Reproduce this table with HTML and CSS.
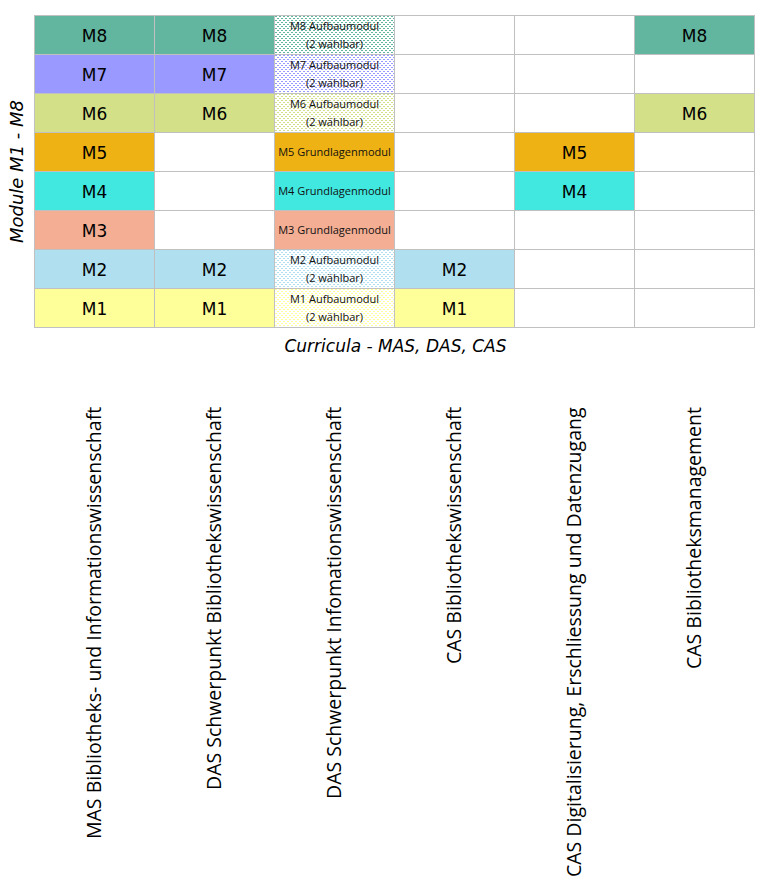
FILE: index.html
```html
<!DOCTYPE html>
<html lang="de">
<head>
<meta charset="utf-8">
<title>Module und Curricula</title>
<link rel="stylesheet" href="styles.css">
</head>
<body>
<div class="page">
  <div class="chart-row">
    <div class="yaxis"><span class="ylabel">Module M1 - M8</span></div>
    <div class="grid">
      <div class="cell m8">M8</div><div class="cell m8">M8</div><div class="cell small hatch h8">M8 Aufbaumodul<br>(2 wählbar)</div><div class="cell"></div><div class="cell"></div><div class="cell m8">M8</div>
      <div class="cell m7">M7</div><div class="cell m7">M7</div><div class="cell small hatch h7">M7 Aufbaumodul<br>(2 wählbar)</div><div class="cell"></div><div class="cell"></div><div class="cell"></div>
      <div class="cell m6">M6</div><div class="cell m6">M6</div><div class="cell small hatch h6">M6 Aufbaumodul<br>(2 wählbar)</div><div class="cell"></div><div class="cell"></div><div class="cell m6">M6</div>
      <div class="cell m5">M5</div><div class="cell"></div><div class="cell small m5">M5 Grundlagenmodul</div><div class="cell"></div><div class="cell m5">M5</div><div class="cell"></div>
      <div class="cell m4">M4</div><div class="cell"></div><div class="cell small m4">M4 Grundlagenmodul</div><div class="cell"></div><div class="cell m4">M4</div><div class="cell"></div>
      <div class="cell m3">M3</div><div class="cell"></div><div class="cell small m3">M3 Grundlagenmodul</div><div class="cell"></div><div class="cell"></div><div class="cell"></div>
      <div class="cell m2">M2</div><div class="cell m2">M2</div><div class="cell small hatch h2">M2 Aufbaumodul<br>(2 wählbar)</div><div class="cell m2">M2</div><div class="cell"></div><div class="cell"></div>
      <div class="cell m1">M1</div><div class="cell m1">M1</div><div class="cell small hatch h1">M1 Aufbaumodul<br>(2 wählbar)</div><div class="cell m1">M1</div><div class="cell"></div><div class="cell"></div>
    </div>
  </div>
  <div class="xlabel">Curricula - MAS, DAS, CAS</div>
  <div class="programs">
    <div class="prog"><span class="prog-text">MAS Bibliotheks- und Informationswissenschaft</span></div>
    <div class="prog"><span class="prog-text">DAS Schwerpunkt Bibliothekswissenschaft</span></div>
    <div class="prog"><span class="prog-text">DAS Schwerpunkt Infomationswissenschaft</span></div>
    <div class="prog"><span class="prog-text">CAS Bibliothekswissenschaft</span></div>
    <div class="prog"><span class="prog-text">CAS Digitalisierung, Erschliessung und Datenzugang</span></div>
    <div class="prog"><span class="prog-text">CAS Bibliotheksmanagement</span></div>
  </div>
</div>
</body>
</html>
```

FILE: styles.css
```css
html, body {
  margin: 0;
  padding: 0;
  background: #ffffff;
}

.page {
  padding-top: 15px;
  color: #000;
}

.chart-row {
  display: flex;
}

.yaxis {
  width: 34px;
  display: flex;
  align-items: center;
  justify-content: center;
}

.ylabel {
  writing-mode: vertical-rl;
  transform: rotate(180deg);
  font-family: "DejaVu Sans", Verdana, sans-serif;
  font-style: italic;
  font-size: 18px;
  line-height: 20px;
  white-space: nowrap;
}

.grid {
  display: grid;
  grid-template-columns: repeat(6, 119px);
  grid-auto-rows: 38px;
  gap: 1px;
  padding: 1px;
  background: #c0c0c0;
}

.cell {
  background: #ffffff;
  display: flex;
  align-items: center;
  justify-content: center;
  text-align: center;
  font-family: "DejaVu Sans", Verdana, sans-serif;
  font-size: 17px;
  padding-top: 2px;
  box-sizing: border-box;
}

.cell.small {
  font-family: "Open Sans", "Liberation Sans", sans-serif;
  font-size: 11px;
  line-height: 18px;
  padding-top: 0;
  color: #111;
}

.m8 { background: #62b6a0; }
.m7 { background: #9999ff; }
.m6 { background: #d4e088; }
.m5 { background: #eeb214; }
.m4 { background: #40e8e0; }
.m3 { background: #f4ae94; }
.m2 { background: #b0e0f0; }
.m1 { background: #ffff99; }

.hatch {
  --hc: #62b6a0;
  background-color: #ffffff;
  background-image:
    conic-gradient(at 2px 1px, transparent 0 75%, var(--hc) 0),
    conic-gradient(at 2px 1px, transparent 0 75%, var(--hc) 0);
  background-size: 4px 4px, 4px 4px;
  background-position: 0 0, 2px 2px;
}

.h8 { --hc: #62b6a0; }
.h7 { --hc: #9999ff; }
.h6 { --hc: #d4e088; }
.h2 { --hc: #b0e0f0; }
.h1 { --hc: #ffff99; }

.xlabel {
  margin-left: 34px;
  width: 723px;
  margin-top: 8px;
  text-align: center;
  font-family: "DejaVu Sans", Verdana, sans-serif;
  font-style: italic;
  font-size: 17px;
  line-height: 20px;
}

.programs {
  display: flex;
  margin-left: 34px;
  margin-top: 51px;
}

.prog {
  width: 120px;
  display: flex;
  justify-content: center;
}

.prog-text {
  writing-mode: vertical-rl;
  transform: rotate(180deg);
  text-align: end;
  height: 480px;
  font-family: "Open Sans", "Liberation Sans", sans-serif;
  font-size: 19.5px;
  line-height: 19.5px;
  white-space: nowrap;
}
```
